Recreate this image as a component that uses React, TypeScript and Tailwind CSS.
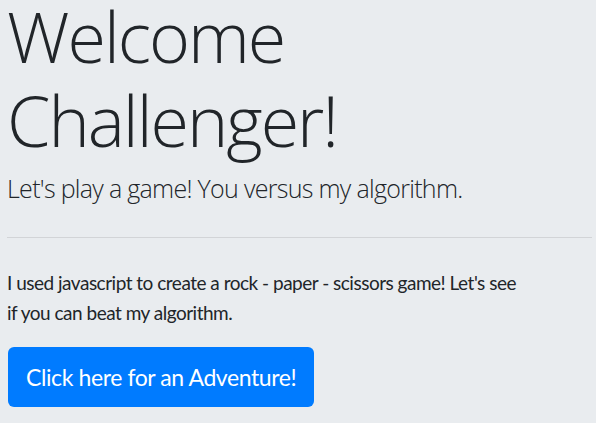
export default function App() {
  return (
    <div className="flex min-h-screen flex-col items-start bg-[#e9ecef] pl-[7px] pr-[4px] text-[#212529] font-['Open_Sans',sans-serif]">
      <h1 className="text-[70px] leading-[84px] font-light tracking-[-2px] -mt-[6px]">
        Welcome Challenger!
      </h1>
      <p className="text-[25px] leading-[37px] font-light mt-[8px] tracking-[-0.7px]">
        Let's play a game! You versus my algorithm.
      </p>
      <hr className="my-[30px] w-full border-t border-[#d2d4d7]" />
      <p className="max-w-[522px] text-[19px] leading-[30px] tracking-[-0.5px] font-['Lato',sans-serif]">
        I used javascript to create a rock - paper - scissors game! Let's see if you can beat my algorithm.
      </p>
      <button className="mt-[19px] ml-px h-[60px] px-[18px] rounded-[6px] bg-[#007bff] text-white text-[23px] tracking-[-0.4px] font-['Lato',sans-serif]">
        Click here for an Adventure!
      </button>
    </div>
  );
}
